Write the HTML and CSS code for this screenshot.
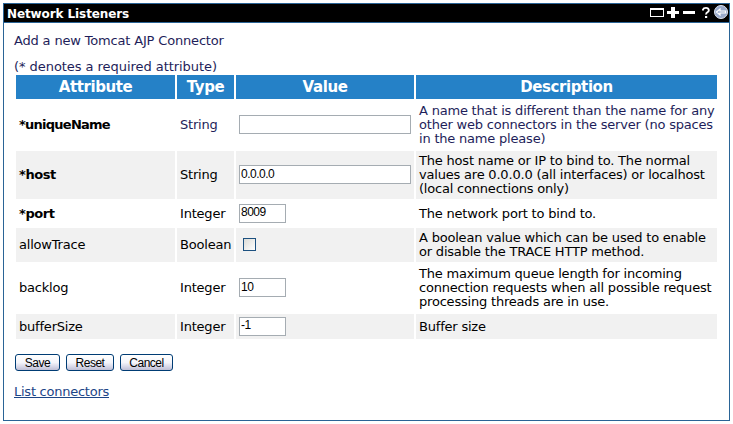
FILE: index.html
```html
<!DOCTYPE html>
<html lang="en">
<head>
<meta charset="utf-8">
<title>Network Listeners</title>
<link rel="stylesheet" href="styles.css">
</head>
<body>
<main class="portlet">
  <header class="bar">
    <h1 class="title">Network Listeners</h1>
    <svg class="tools" width="80" height="18" viewBox="0 0 80 18" aria-hidden="true">
      <path d="M1 4h14v9H1zM2 6v6h12V6z" fill="#fff" fill-rule="evenodd"/>
      <path d="M18 7h4V3h4v4h4v3h-4v4h-4v-4h-4zM34 7h12v3H34z" fill="#fff"/>
      <path d="M54 6.500V5.500Q54.500 3.900 57 3.900T59.800 6.200Q59.800 7.500 58.400 8.300T57.200 10.500" fill="none" stroke="#fff" stroke-width="1.900"/>
      <path d="M56 12h2.200v2H56z" fill="#fff"/>
      <circle cx="72" cy="8" r="6.500" fill="#99aacb" stroke="#dfe5f2"/>
      <path d="M67.500 8l3.500-3v2h5.500v2H71v2z" fill="#99aacb" stroke="#fff" stroke-width="1.200"/>
    </svg>
  </header>
  <form class="content">
    <p class="intro">Add a new Tomcat AJP Connector</p>
    <p class="note">(* denotes a required attribute)</p>
    <table class="grid">
      <colgroup><col class="c1"><col class="c2"><col class="c3"><col class="c4"></colgroup>
      <tr class="head"><th>Attribute</th><th>Type</th><th>Value</th><th>Description</th></tr>
      <tr class="r3 first"><td class="req">*uniqueName</td><td>String</td><td><input class="field" type="text"></td><td>A name that is different than the name for any<br>other web connectors in the server (no spaces<br>in the name please)</td></tr>
      <tr class="r3 alt"><td class="req host">*host</td><td>String</td><td><input class="field" type="text" value="0.0.0.0"></td><td>The host name or IP to bind to. The normal<br>values are 0.0.0.0 (all interfaces) or localhost<br>(local connections only)</td></tr>
      <tr class="r1"><td class="req host">*port</td><td>Integer</td><td><input class="field short" type="text" value="8009"></td><td>The network port to bind to.</td></tr>
      <tr class="r2 alt"><td>allowTrace</td><td>Boolean</td><td><input class="check" type="checkbox"></td><td>A boolean value which can be used to enable<br>or disable the TRACE HTTP method.</td></tr>
      <tr class="r3"><td>backlog</td><td>Integer</td><td><input class="field short" type="text" value="10"></td><td>The maximum queue length for incoming<br>connection requests when all possible request<br>processing threads are in use.</td></tr>
      <tr class="r1 alt"><td>bufferSize</td><td>Integer</td><td><input class="field short" type="text" value="-1"></td><td>Buffer size</td></tr>
    </table>
    <div class="actions">
      <button class="btn save" type="button">Save</button>
      <button class="btn reset" type="button">Reset</button>
      <button class="btn cancel" type="button">Cancel</button>
    </div>
    <a class="link" href="#">List connectors</a>
  </form>
</main>
</body>
</html>
```
FILE: styles.css
```css
* { box-sizing: border-box; }
body {
  margin: 0;
  padding: 3px;
  background: #fff;
  color: #1e1e5a;
  font: 13px/14px "DejaVu Sans", sans-serif;
  letter-spacing: -0.2px;
}
.portlet { width: 727px; height: 418px; border: 1px solid #2a6496; }
.bar {
  display: flex;
  justify-content: space-between;
  height: 19px;
  background: #000;
  border-bottom: 1px solid #2a6496;
}
.title {
  margin: 0;
  padding-left: 3px;
  color: #fff;
  font-size: 12px;
  line-height: 20px;
  letter-spacing: -0.1px;
}
.content { padding: 10px 10px 0; white-space: nowrap; }
p { margin: 0; line-height: 16px; }
.intro { letter-spacing: -0.17px; }
.note { margin-top: 10px; letter-spacing: -0.05px; }
.grid { width: 705px; table-layout: fixed; border-collapse: separate; border-spacing: 2px; margin-top: -2px; }
.c1 { width: 159px; }
.c2 { width: 57px; }
.c3 { width: 178px; }
.c4 { width: 301px; }
th { height: 24px; padding: 0; background: #2581c7; color: #fff; font-size: 15px; line-height: 24px; letter-spacing: -0.4px; }
td { padding: 0 3px; color: #000; vertical-align: middle; }
.first td { color: #1e1e5a; }
.first .req { color: #000; }
.req { font-weight: bold; letter-spacing: -0.75px; }
.host { letter-spacing: -0.4px; }
.alt td { background: #f1f1f1; }
.r1 { height: 25px; }
.r2 { height: 34px; }
.r3 { height: 48px; }
.field {
  display: block;
  width: 172px;
  height: 19px;
  margin: 0 0 1px;
  padding: 0 1px 2px;
  border: 1px solid #a5acb2;
  background: #fff;
  color: #000;
  font: 12px/16px "Liberation Sans", sans-serif;
  letter-spacing: -0.5px;
}
.short { width: 47px; }
.check {
  appearance: none;
  display: block;
  width: 13px;
  height: 13px;
  margin: 0 4px 2px;
  border: 1px solid #1c5180;
  background: linear-gradient(135deg, #dcdcd7, #fff);
}
.actions { display: flex; gap: 6px; margin: 13px 0 0 1px; }
.btn {
  height: 17px;
  padding: 1px 0 0;
  border: 1px solid #003c74;
  border-radius: 3px;
  background: linear-gradient(#fff 0%, #f5f5fa 50%, #d5d5e6 80%, #bfbfd5 100%);
  color: #000;
  font: 12px/14px "Liberation Sans", sans-serif;
  letter-spacing: -0.5px;
}
.save { width: 45px; }
.reset { width: 48px; }
.cancel { width: 53px; }
.link { display: block; width: max-content; margin-top: 13px; color: #1c4587; line-height: 16px; letter-spacing: -0.25px; }
```
